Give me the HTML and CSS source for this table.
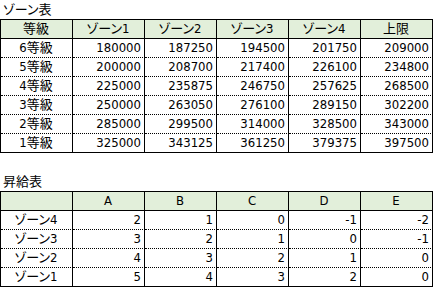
FILE: index.html
```html
<!DOCTYPE html>
<html lang="ja">
<head>
<meta charset="utf-8">
<title>ゾーン表</title>
<link rel="stylesheet" href="styles.css">
</head>
<body>
<div class="sheet">
  <div class="title">ゾーン表</div>
  <table class="grid">
    <thead>
      <tr><th>等級</th><th>ゾーン1</th><th>ゾーン2</th><th>ゾーン3</th><th>ゾーン4</th><th>上限</th></tr>
    </thead>
    <tbody>
      <tr><td class="label">6等級</td><td>180000</td><td>187250</td><td>194500</td><td>201750</td><td>209000</td></tr>
      <tr><td class="label">5等級</td><td>200000</td><td>208700</td><td>217400</td><td>226100</td><td>234800</td></tr>
      <tr><td class="label">4等級</td><td>225000</td><td>235875</td><td>246750</td><td>257625</td><td>268500</td></tr>
      <tr><td class="label">3等級</td><td>250000</td><td>263050</td><td>276100</td><td>289150</td><td>302200</td></tr>
      <tr><td class="label">2等級</td><td>285000</td><td>299500</td><td>314000</td><td>328500</td><td>343000</td></tr>
      <tr><td class="label">1等級</td><td>325000</td><td>343125</td><td>361250</td><td>379375</td><td>397500</td></tr>
    </tbody>
  </table>
  <div class="blank"></div>
  <div class="title">昇給表</div>
  <table class="grid">
    <thead>
      <tr><th></th><th>A</th><th>B</th><th>C</th><th>D</th><th>E</th></tr>
    </thead>
    <tbody>
      <tr><td class="label">ゾーン4</td><td>2</td><td>1</td><td>0</td><td>-1</td><td>-2</td></tr>
      <tr><td class="label">ゾーン3</td><td>3</td><td>2</td><td>1</td><td>0</td><td>-1</td></tr>
      <tr><td class="label">ゾーン2</td><td>4</td><td>3</td><td>2</td><td>1</td><td>0</td></tr>
      <tr><td class="label">ゾーン1</td><td>5</td><td>4</td><td>3</td><td>2</td><td>0</td></tr>
    </tbody>
  </table>
</div>
</body>
</html>
```
FILE: styles.css
```css
html, body {
  margin: 0;
  padding: 0;
  background: #ffffff;
}
body {
  font-family: "DejaVu Sans Condensed", "DejaVu Sans", "Noto Sans CJK JP", sans-serif;
  font-size: 13px;
  color: #000000;
  font-feature-settings: "palt" 1;
}
.sheet {
  width: 434px;
}
.title {
  height: 19px;
  line-height: 19px;
  padding-left: 3px;
  box-sizing: border-box;
}
.blank {
  height: 19px;
}
.grid {
  border-collapse: separate;
  border-spacing: 0;
  table-layout: fixed;
  width: 433px;
  border-left: 1px solid #000;
  border-top: 1px solid #000;
}
.grid th,
.grid td {
  width: 72px;
  height: 19px;
  box-sizing: border-box;
  padding: 0 3px 0 2px;
  border-right: 1px solid #000;
  border-bottom: 1px dotted #000;
  line-height: 18px;
  white-space: nowrap;
  overflow: hidden;
  vertical-align: bottom;
  font-weight: normal;
}
.grid th {
  background: #e2efda;
  text-align: center;
  border-bottom: 1px solid #000;
}
.grid td {
  text-align: right;
}
.grid td.label {
  text-align: center;
}
.grid tbody tr:last-child td {
  border-bottom: 1px solid #000;
}
```
